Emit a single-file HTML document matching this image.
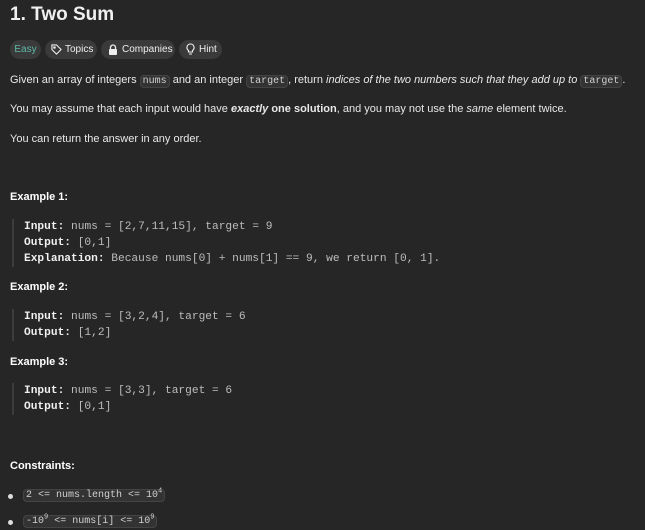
<html><head><style>
body{margin:0;background:#262626;width:645px;height:530px;overflow:hidden;font-family:"Liberation Sans",sans-serif;color:#e8e8e8;position:relative}
.a{position:absolute;white-space:nowrap}
.t{font-size:11px;line-height:16px}
code,.m{font-family:"Liberation Mono",monospace;font-size:11px}
.ic{background:#333;border:1px solid #444;border-radius:4px;padding:0 2px;color:#d0d0d0;font-size:10px}
.tag{position:absolute;top:40px;height:19px;border-radius:10px;background:#3a3a3a;font-size:10px;line-height:19px;color:#eee}
.pre{position:absolute;left:12px;border-left:2px solid #3c3c3c;padding-left:10px;font-family:"Liberation Mono",monospace;font-size:11.2px;line-height:16px;color:#bdbdbd;white-space:pre}
.pre b{color:#f0f0f0}
h4{margin:0;font-size:11px;font-weight:bold;position:absolute;left:10px;color:#fff}
</style></head><body>
<div class="a" style="left:10px;top:4px;font-size:19px;font-weight:bold;color:#f0f0f0">1. Two Sum</div>
<div class="tag" style="left:10px;width:31px;text-align:center;color:#5fb8a8">Easy</div>
<div class="tag" style="left:45px;width:52px"><svg style="position:absolute;left:6px;top:4px" width="11" height="11" viewBox="0 0 12 12" fill="none" stroke="#eee" stroke-width="1.2"><path d="M1 1h5l5 5-5 5-5-5z"/><circle cx="3.8" cy="3.8" r=".8"/></svg><span style="position:absolute;left:20px">Topics</span></div>
<div class="tag" style="left:101px;width:74px"><svg style="position:absolute;left:7px;top:4px" width="10" height="11" viewBox="0 0 10 11"><path d="M2.5 5V3.5a2.5 2.5 0 0 1 5 0V5" stroke="#eee" stroke-width="1.3" fill="none"/><rect x="1" y="5" width="8" height="6" rx="1" fill="#eee"/></svg><span style="position:absolute;left:21px">Companies</span></div>
<div class="tag" style="left:179px;width:43px"><svg style="position:absolute;left:7px;top:3px" width="9" height="13" viewBox="0 0 9 13" fill="none" stroke="#eee" stroke-width="1.1"><path d="M4.5 1a3.5 3.5 0 0 0-2 6.4V9h4V7.4A3.5 3.5 0 0 0 4.5 1zM3 11h3"/></svg><span style="position:absolute;left:20px">Hint</span></div>
<div class="a t" style="left:10px;top:72px">Given an array of integers <code class="ic">nums</code> and an integer <code class="ic">target</code>, return <i>indices of the two numbers such that they add up to</i> <code class="ic">target</code>.</div>
<div class="a t" style="left:10px;top:101px">You may assume that each input would have <b><i>exactly</i> one solution</b>, and you may not use the <i>same</i> element twice.</div>
<div class="a t" style="left:10px;top:131px">You can return the answer in any order.</div>
<h4 style="top:191px">Example 1:</h4>
<div class="pre" style="top:219px"><b>Input:</b> nums = [2,7,11,15], target = 9
<b>Output:</b> [0,1]
<b>Explanation:</b> Because nums[0] + nums[1] == 9, we return [0, 1].</div>
<h4 style="top:281px">Example 2:</h4>
<div class="pre" style="top:309px"><b>Input:</b> nums = [3,2,4], target = 6
<b>Output:</b> [1,2]</div>
<h4 style="top:356px">Example 3:</h4>
<div class="pre" style="top:383px"><b>Input:</b> nums = [3,3], target = 6
<b>Output:</b> [0,1]</div>
<h4 style="top:460px">Constraints:</h4>
<div class="a" style="left:8px;top:494px;width:5px;height:5px;border-radius:3px;background:#ddd"></div>
<div class="a" style="left:23px;top:488px"><code class="ic">2 &lt;= nums.length &lt;= 10<sup style="font-size:7px">4</sup></code></div>
<div class="a" style="left:8px;top:520px;width:5px;height:5px;border-radius:3px;background:#ddd"></div>
<div class="a" style="left:23px;top:514px"><code class="ic">-10<sup style="font-size:7px">9</sup> &lt;= nums[i] &lt;= 10<sup style="font-size:7px">9</sup></code></div>
</body></html>
